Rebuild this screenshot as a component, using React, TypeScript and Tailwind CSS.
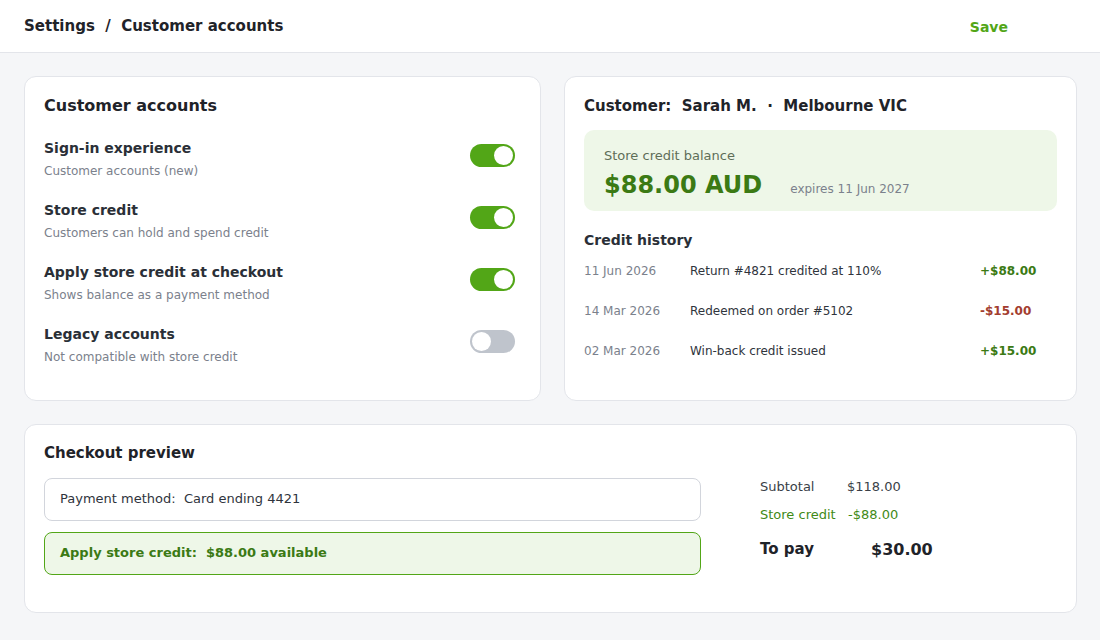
const SANS = "font-['DejaVu_Sans',sans-serif]";

const Toggle = ({ on }: { on: boolean }) => (
  <div
    className={`mt-[6px] w-[45px] h-[23px] rounded-full flex items-center px-[2px] ${
      on ? "bg-[#52a617] justify-end" : "bg-[#bfc4cc] justify-start"
    }`}
  >
    <div className="w-[19px] h-[19px] rounded-full bg-white" />
  </div>
);

const settings = [
  { title: "Sign-in experience", sub: "Customer accounts (new)", on: true },
  { title: "Store credit", sub: "Customers can hold and spend credit", on: true },
  { title: "Apply store credit at checkout", sub: "Shows balance as a payment method", on: true },
  { title: "Legacy accounts", sub: "Not compatible with store credit", on: false },
];

const history = [
  { date: "11 Jun 2026", desc: "Return #4821 credited at 110%", amt: "+$88.00", pos: true },
  { date: "14 Mar 2026", desc: "Redeemed on order #5102", amt: "-$15.00", pos: false },
  { date: "02 Mar 2026", desc: "Win-back credit issued", amt: "+$15.00", pos: true },
];

export default function App() {
  return (
    <div className={`${SANS} min-h-[640px] bg-[#f5f6f8] text-[#1f2329]`}>
      {/* Top bar */}
      <div className="h-[53px] bg-white border-b border-[#e3e5ea] flex items-center justify-between pl-6 pr-[92px]">
        <div className="text-[15px] font-bold">Settings&nbsp; /&nbsp; Customer accounts</div>
        <div className="text-[14px] font-bold text-[#52a617] mt-[2px]">Save</div>
      </div>

      <div className="pl-6 pr-[23px] pt-[23px] flex flex-col gap-[23px]">
        <div className="grid grid-cols-[517px_513px] gap-[23px]">
          {/* Settings card */}
          <div className="bg-white border border-[#e3e5ea] rounded-xl h-[325px] px-[19px] pt-[17px]">
            <h2 className="text-[16px] font-bold">Customer accounts</h2>
            <div className="mt-[20px] flex flex-col gap-[20px]">
              {settings.map((s) => (
                <div key={s.title} className="flex items-start justify-between pr-[6px]">
                  <div>
                    <div className="text-[14px] font-bold text-[#2a2f37]">{s.title}</div>
                    <div className="text-[12px] text-[#7b818c] mt-[3px]">{s.sub}</div>
                  </div>
                  <Toggle on={s.on} />
                </div>
              ))}
            </div>
          </div>

          {/* Customer card */}
          <div className="bg-white border border-[#e3e5ea] rounded-xl h-[325px] px-[19px] pt-[18px]">
            <h2 className="text-[15px] font-bold">Customer:&nbsp; Sarah M.&nbsp; ·&nbsp; Melbourne VIC</h2>
            <div className="mt-[12px] bg-[#eef7e8] rounded-[10px] h-[81px] px-5 pt-[16px]">
              <div className="text-[13px] text-[#5e6e58]">Store credit balance</div>
              <div className="flex items-baseline gap-7 mt-[2px]">
                <div className="text-[24px] font-bold text-[#3b7a14]">$88.00 AUD</div>
                <div className="text-[12px] text-[#7b818c]">expires 11 Jun 2027</div>
              </div>
            </div>
            <h3 className="mt-[19px] text-[14px] font-bold text-[#2a2f37]">Credit history</h3>
            <div className="mt-[11px] flex flex-col gap-[22px]">
              {history.map((h) => (
                <div key={h.date} className="flex items-center text-[12px] h-[18px]">
                  <div className="w-[106px] text-[#7b818c]">{h.date}</div>
                  <div className="w-[290px] text-[#2f343c]">{h.desc}</div>
                  <div className={`font-bold ${h.pos ? "text-[#3b7a14]" : "text-[#a33d2f]"}`}>{h.amt}</div>
                </div>
              ))}
            </div>
          </div>
        </div>

        {/* Checkout preview */}
        <div className="bg-white border border-[#e3e5ea] rounded-xl h-[189px] px-[19px] pt-[17px]">
          <h2 className="text-[15px] font-bold">Checkout preview</h2>
          <div className="mt-[13px] flex">
            <div className="w-[657px] flex flex-col gap-[11px]">
              <div className="h-[43px] border border-[#d2d5dc] rounded-lg flex items-center px-[15px] text-[13px] text-[#2f343c]">
                Payment method:&nbsp; Card ending 4421
              </div>
              <div className="h-[43px] border border-[#52a617] bg-[#eef7e8] rounded-lg flex items-center px-[15px] text-[13px] font-bold text-[#3b7a14]">
                Apply store credit:&nbsp; $88.00 available
              </div>
            </div>
            <div className="ml-[59px] text-[13px]">
              <div className="flex h-[18px] items-center">
                <div className="w-[87px] text-[#3a3f47]">Subtotal</div>
                <div className="text-[#3a3f47]">$118.00</div>
              </div>
              <div className="flex h-[18px] items-center mt-[10px] text-[#3f8a17]">
                <div className="w-[88px]">Store credit</div>
                <div>-$88.00</div>
              </div>
              <div className="flex items-center mt-[14px] font-bold">
                <div className="w-[111px] text-[15px]">To pay</div>
                <div className="text-[16px]">$30.00</div>
              </div>
            </div>
          </div>
        </div>
      </div>
    </div>
  );
}
